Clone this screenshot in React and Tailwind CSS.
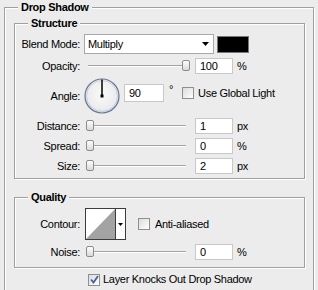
import clsx from "clsx";

const Group = ({ title, className, children }) => (
  <div
    className={clsx(
      "border border-[#a0a0a0] shadow-[1px_1px_0_#fff,inset_1px_1px_0_#fff]",
      className
    )}
  >
    <div className="-mt-[7px] ml-[13px] h-[13px] w-fit bg-[#ececec] px-[3px] font-bold leading-[13px]">
      {title}
    </div>
    {children}
  </div>
);

const Row = ({ label, className, children }) => (
  <div className={clsx("flex items-center", className)}>
    <span className="w-[65px] shrink-0 text-right leading-[13px]">{label}</span>
    {children}
  </div>
);

const Slider = ({ value }) => (
  <div className="relative ml-[6px] h-[16px] w-[104px] shrink-0">
    <div className="absolute left-[2px] right-[4px] top-[7px] h-[2px] border-t border-b border-t-[#a3a3a3] border-b-white" />
    <div
      className="absolute top-[2px] h-[11px] w-[8px] rounded-[2px] border border-[#8c8c8c] bg-gradient-to-b from-white to-[#d9d9d9]"
      style={{ left: (value / 100) * 96 }}
    />
  </div>
);

const NumBox = ({ value }) => (
  <div className="ml-[5px] h-[16px] w-[38px] shrink-0 border border-[#c8c8c8] bg-white pl-[4px] leading-[14px]">
    {value}
  </div>
);

const Check = ({ checked }) => (
  <span className="flex h-[12px] w-[12px] shrink-0 items-center justify-center border border-[#8e8f8f] bg-gradient-to-br from-[#dcdcdc] to-white">
    {checked && (
      <svg width="9" height="9" viewBox="0 0 9 9">
        <path d="M1 4.5 L3.5 7.5 L8 1" fill="none" stroke="#45609a" strokeWidth="1.8" />
      </svg>
    )}
  </span>
);

const SliderRow = ({ label, value, amount, unit, className }) => (
  <Row label={label} className={clsx("h-[16px]", className)}>
    <Slider value={value} />
    <NumBox value={amount} />
    <span className="ml-[4px] leading-[13px]">{unit}</span>
  </Row>
);

export default function App() {
  return (
    <div className="h-[290px] w-[318px] overflow-hidden bg-[#ececec] pt-[7px] pl-[4px] font-['Liberation_Sans',Arial,sans-serif] text-[11px] tracking-[-0.3px] text-black">
      <Group title="Drop Shadow" className="w-[310px] pb-[12px]">
        <Group title="Structure" className="ml-[9px] mt-[9px] w-[291px] pb-[4px]">
          <Row label="Blend Mode:" className="mt-[4px] h-[20px]">
            <div className="ml-[4px] flex h-[20px] w-[130px] items-center justify-between border border-[#a8a8a8] bg-white pl-[3px] pr-[4px]">
              <span>Multiply</span>
              <svg width="7" height="4" viewBox="0 0 7 4">
                <path d="M0 0h7L3.5 4z" fill="#000" />
              </svg>
            </div>
            <div className="ml-[3px] h-[17px] w-[32px] border border-[#777] bg-black" />
          </Row>

          <SliderRow label="Opacity:" value={100} amount="100" unit="%" className="mt-[4px]" />

          <Row label="Angle:" className="mt-[4px] h-[36px]">
            <svg className="ml-[4px] shrink-0" width="36" height="36" viewBox="0 0 36 36">
              <defs>
                <radialGradient id="dial" cx="50%" cy="45%" r="55%">
                  <stop offset="0%" stopColor="#fafafa" />
                  <stop offset="80%" stopColor="#ececec" />
                  <stop offset="100%" stopColor="#d4d8e0" />
                </radialGradient>
              </defs>
              <circle cx="18" cy="18" r="17" fill="url(#dial)" stroke="#66759a" strokeWidth="1.2" />
              <circle cx="18" cy="18" r="15.5" fill="none" stroke="#c8cedb" strokeWidth="1" />
              <line x1="18" y1="18" x2="18" y2="1.5" stroke="#000" strokeWidth="1.5" />
              <rect x="16.5" y="16.5" width="3" height="3" fill="#000" />
            </svg>
            <div className="mb-[6px] flex items-center">
              <div className="ml-[4px] h-[18px] w-[40px] border border-[#c8c8c8] bg-white pl-[4px] leading-[16px]">
                90
              </div>
              <span className="mb-[8px] ml-[5px] leading-[13px]">°</span>
              <span className="ml-[9px]">
                <Check />
              </span>
              <span className="ml-[4px] leading-[13px]">Use Global Light</span>
            </div>
          </Row>

          <SliderRow label="Distance:" value={0} amount="1" unit="px" className="mt-[4px]" />
          <SliderRow label="Spread:" value={0} amount="0" unit="%" className="mt-[4px]" />
          <SliderRow label="Size:" value={0} amount="2" unit="px" className="mt-[4px]" />
        </Group>

        <Group title="Quality" className="ml-[9px] mt-[18px] w-[291px] pb-[7px]">
          <Row label="Contour:" className="mt-[4px] h-[32px]">
            <div className="ml-[5px] flex h-[32px] w-[41px] shrink-0 border border-[#3c3c3c] bg-white">
              <svg width="29" height="30" viewBox="0 0 29 30" className="shrink-0">
                <polygon points="0,30 29,0 29,30" fill="#a3a3a3" />
              </svg>
              <div className="flex flex-1 items-center justify-center border-l border-[#3c3c3c]">
                <svg width="5" height="3" viewBox="0 0 5 3">
                  <path d="M0 0h5L2.5 3z" fill="#000" />
                </svg>
              </div>
            </div>
            <span className="ml-[12px]">
              <Check />
            </span>
            <span className="ml-[5px] leading-[13px]">Anti-aliased</span>
          </Row>
          <SliderRow label="Noise:" value={0} amount="0" unit="%" className="mt-[4px]" />
        </Group>

        <div className="ml-[83px] mt-[5px] flex items-center">
          <Check checked />
          <span className="ml-[3px] leading-[13px]">Layer Knocks Out Drop Shadow</span>
        </div>
      </Group>
    </div>
  );
}
